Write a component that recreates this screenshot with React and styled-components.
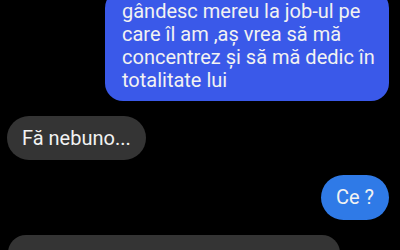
import React from "react";
import styled, { createGlobalStyle } from "styled-components";

const Global = createGlobalStyle`
  html, body { margin: 0; padding: 0; background: #000; }
  body { width: 400px; height: 250px; overflow: hidden; font-family: Roboto, "Noto Sans", sans-serif; }
`;

const Thread = styled.div`
  display: flex;
  flex-direction: column;
  gap: 15px;
  padding: 0 11px 0 8px;
  margin-top: -10px;
`;

const Row = styled.div`
  display: flex;
  justify-content: ${(p) => (p.$me ? "flex-end" : "flex-start")};
`;

const Bubble = styled.div`
  box-sizing: border-box;
  color: #f2f2f2;
  font-size: 20px;
  line-height: 23px;
  background: ${(p) => p.$bg};
  border-radius: ${(p) => p.$radius};
  padding: ${(p) => p.$pad};
  width: ${(p) => p.$width || "auto"};
  height: ${(p) => p.$height || "auto"};
  margin-left: ${(p) => p.$shift || "0"};
  display: flex;
  flex-direction: column;
  justify-content: center;
`;

const Line = styled.span`
  white-space: nowrap;
`;

export default function App() {
  const lines = [
    "gândesc mereu la job-ul pe",
    "care îl am ,aș vrea să mă",
    "concentrez și să mă dedic în",
    "totalitate lui",
  ];
  return (
    <>
      <Global />
      <Thread>
        <Row $me>
          <Bubble
            $bg="#3a59e9"
            $radius="18px"
            $pad="10px 17px 9px 17px"
            $width="284px"
          >
            {lines.map((l) => (
              <Line key={l}>{l}</Line>
            ))}
          </Bubble>
        </Row>
        <Row>
          <Bubble
            $bg="#343434"
            $radius="22px"
            $pad="0 15px"
            $width="139px"
            $height="44px"
            $shift="-1px"
          >
            <Line>Fă nebuno...</Line>
          </Bubble>
        </Row>
        <Row $me>
          <Bubble
            $bg="#2f7ae7"
            $radius="23px"
            $pad="0 15px"
            $width="68px"
            $height="45px"
          >
            <Line>Ce ?</Line>
          </Bubble>
        </Row>
        <Row>
          <Bubble
            $bg="#343434"
            $radius="18px"
            $pad="0 15px"
            $width="332px"
            $height="44px"
          />
        </Row>
      </Thread>
    </>
  );
}
